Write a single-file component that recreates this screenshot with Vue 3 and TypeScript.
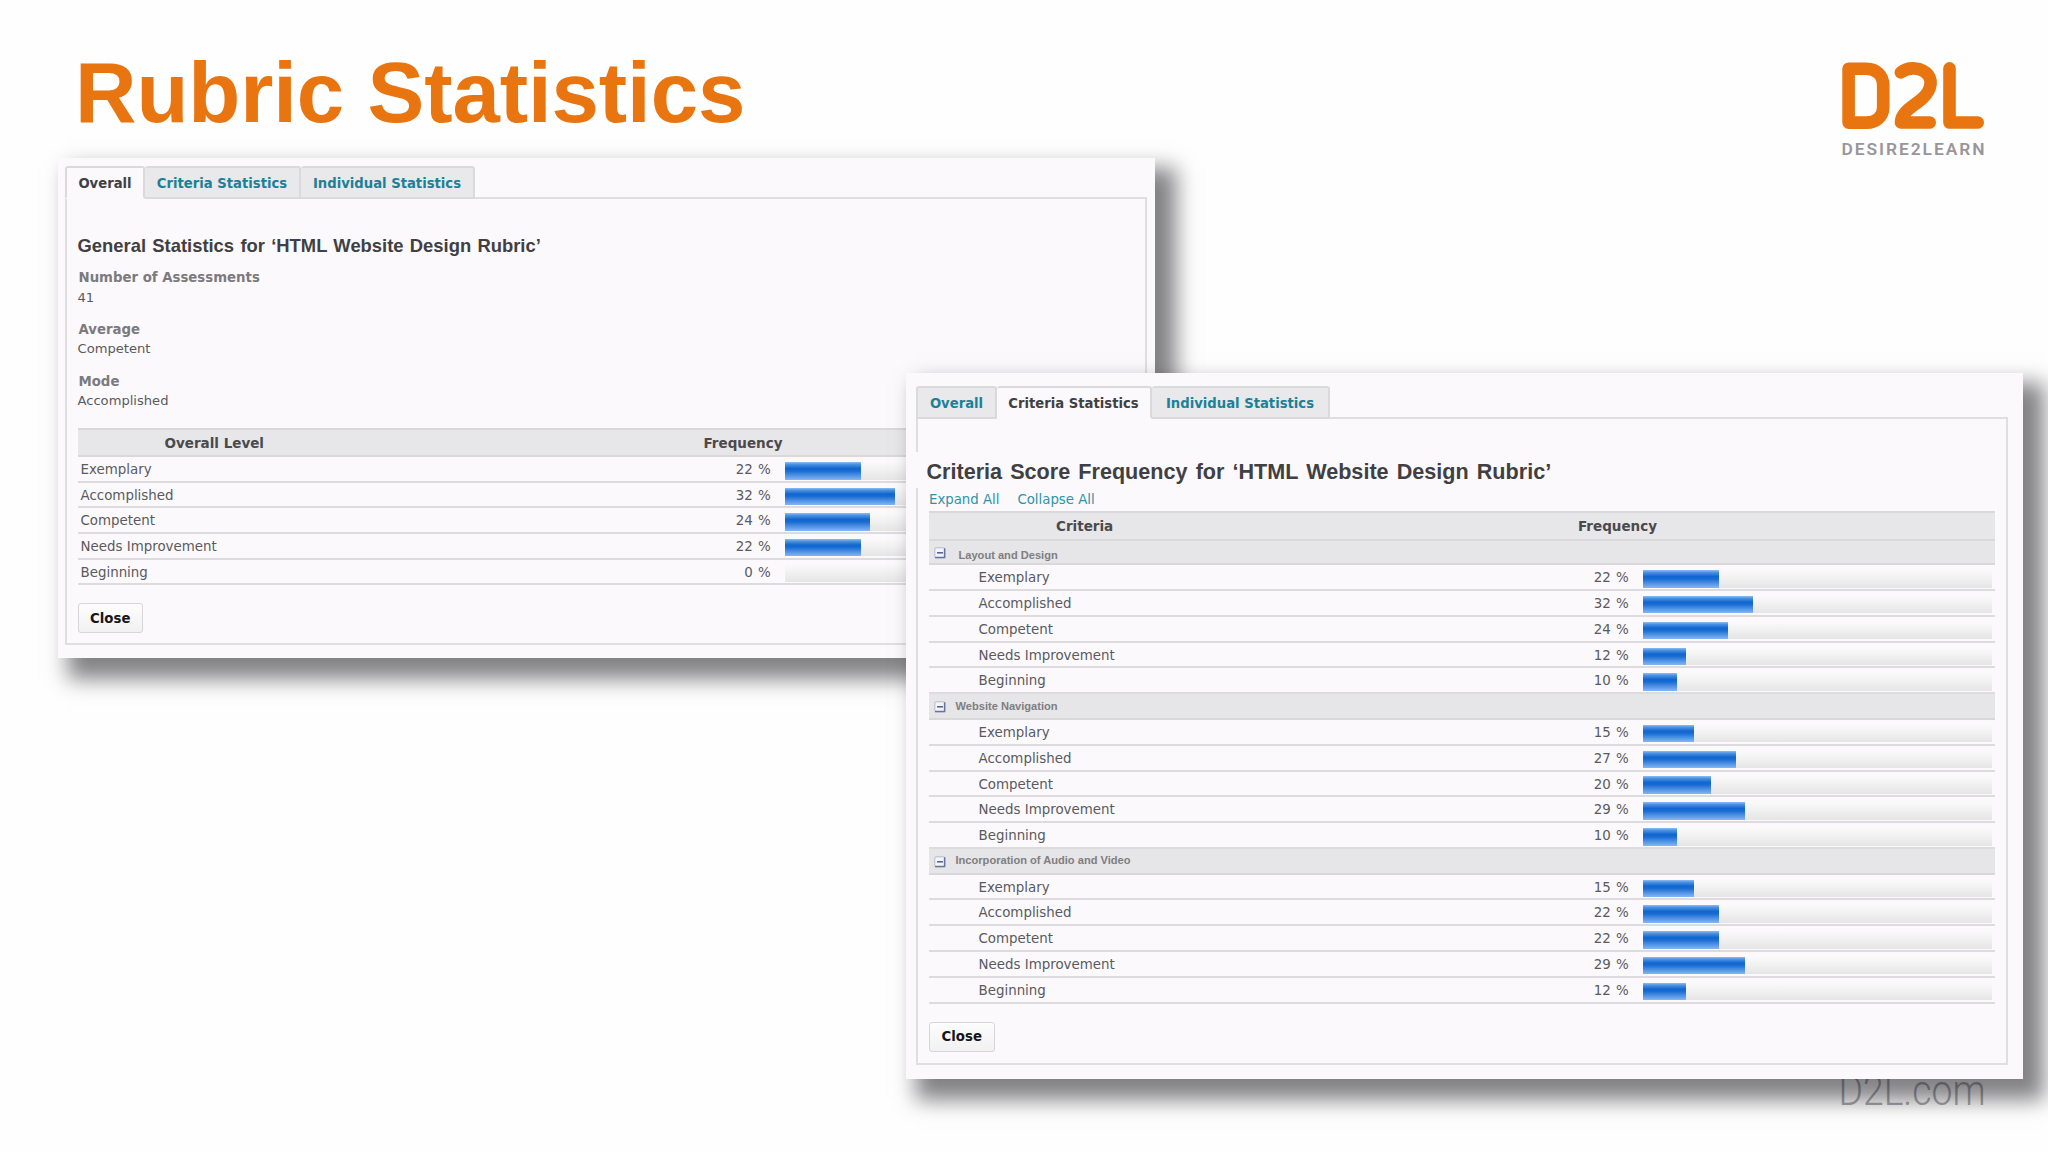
<script setup lang="ts">
interface Level {
  name: string
  percent: number
}
interface Group {
  title: string
  first: boolean
  levels: Level[]
}

const levelNames: string[] = ['Exemplary', 'Accomplished', 'Competent', 'Needs Improvement', 'Beginning']

const toLevels = (percents: number[]): Level[] =>
  percents.map((percent, i) => ({ name: levelNames[i], percent }))

const overall: Level[] = toLevels([22, 32, 24, 22, 0])

const facts = [
  { label: 'Number of Assessments', value: '41' },
  { label: 'Average', value: 'Competent' },
  { label: 'Mode', value: 'Accomplished' },
]

const groups: Group[] = [
  { title: 'Layout and Design', first: true, levels: toLevels([22, 32, 24, 12, 10]) },
  { title: 'Website Navigation', first: false, levels: toLevels([15, 27, 20, 29, 10]) },
  { title: 'Incorporation of Audio and Video', first: false, levels: toLevels([15, 22, 22, 29, 12]) },
]

/* Bars grow in whole steps: one step is 2.5 percent. */
const STEP = 8.49
const barWidth = (percent: number): string => `${(Math.round(percent * 0.4) * STEP).toFixed(1)}px`
</script>

<template>
  <main class="slide">
    <h1 class="title">Rubric Statistics</h1>

    <svg class="logo" width="160" height="110" viewBox="0 0 160 110">
      <g fill="none" stroke="#e8750f" stroke-width="12.6" stroke-linecap="round" stroke-linejoin="round">
        <path d="M18.6 18.8H36.5C46 18.8 53.2 25.4 53.2 35.4V57.500C53.200 66.500 46 72.600 36.500 72.600H18.600Z" />
        <path d="M70.800 22.500C78 16.400 92 16.900 98 24.900C104 33 99 43.500 90 50.500C80 58 70.800 63.500 71 72.500H99.700" />
        <path d="M119.500 18.400V72.500H147.700" />
      </g>
      <text x="11.500" y="104.500" textLength="143" lengthAdjust="spacing">DESIRE2LEARN</text>
    </svg>

    <svg class="site" width="160" height="60" viewBox="0 0 160 60">
      <text x="8.500" y="44.500" textLength="147" lengthAdjust="spacingAndGlyphs">D2L.com</text>
    </svg>

    <section class="window window-overall">
      <nav class="tabs">
        <a class="tab active w78">Overall</a>
        <a class="tab w156">Criteria Statistics</a>
        <a class="tab w174">Individual Statistics</a>
      </nav>
      <div class="panel">
        <h2>General Statistics for ‘HTML Website Design Rubric’</h2>
        <dl class="facts">
          <div v-for="f in facts" :key="f.label" class="fact">
            <dt>{{ f.label }}</dt>
            <dd>{{ f.value }}</dd>
          </div>
        </dl>
        <div class="table">
          <div class="head">
            <span class="head-name">Overall Level</span>
            <span>Frequency</span>
          </div>
          <div v-for="l in overall" :key="l.name" class="row">
            <span class="name">{{ l.name }}</span>
            <span class="pct">{{ l.percent }} %</span>
            <span class="track"><span class="bar" :style="{ width: barWidth(l.percent) }"></span></span>
          </div>
        </div>
        <button class="close" type="button">Close</button>
      </div>
    </section>

    <section class="window window-criteria">
      <nav class="tabs">
        <a class="tab w81">Overall</a>
        <a class="tab active w155">Criteria Statistics</a>
        <a class="tab w178">Individual Statistics</a>
      </nav>
      <div class="panel">
        <h2>Criteria Score Frequency for ‘HTML Website Design Rubric’</h2>
        <div class="links"><a>Expand All</a><a>Collapse All</a></div>
        <div class="table">
          <div class="head">
            <span class="head-name">Criteria</span>
            <span>Frequency</span>
          </div>
          <template v-for="g in groups" :key="g.title">
            <div class="group" :class="{ first: g.first }">
              <svg class="toggle" width="12" height="12" viewBox="0 0 12 12">
                <rect x="0.800" y="0.800" width="10" height="10" rx="1.200" fill="#f4f5f9" stroke="#b4b9ca" />
                <path d="M10.600 1.200V10.500H1" fill="none" stroke="#69769c" stroke-width="1.500" />
                <path d="M3 5.800H9" stroke="#4c5c90" stroke-width="1.500" />
              </svg>
              <span>{{ g.title }}</span>
            </div>
            <div v-for="l in g.levels" :key="l.name" class="row">
              <span class="name">{{ l.name }}</span>
              <span class="pct">{{ l.percent }} %</span>
              <span class="track"><span class="bar" :style="{ width: barWidth(l.percent) }"></span></span>
            </div>
          </template>
        </div>
        <button class="close" type="button">Close</button>
      </div>
    </section>
  </main>
</template>

<style>
body {
  margin: 0;
  background: #fefefe;
}
</style>

<style scoped>
.slide {
  position: relative;
  width: 2048px;
  height: 1152px;
  overflow: hidden;
  background: #fefefe;
  font-family: "DejaVu Sans", Verdana, sans-serif;
  font-size: 13.4px;
  color: #5a595c;
}
.slide * {
  box-sizing: border-box;
}
.title {
  margin: 0;
  padding: 43px 0 0 75px;
  font: bold 85.2px/100px "Liberation Sans", Arial, sans-serif;
  letter-spacing: -0.12px;
  color: #e8750f;
  white-space: nowrap;
}
.logo {
  position: absolute;
  left: 1830px;
  top: 50px;
}
.logo text {
  font: 600 17.4px Roboto, sans-serif;
  fill: #98969a;
}
.site {
  position: absolute;
  left: 1830px;
  top: 1060px;
}
.site text {
  font: 300 42px Roboto, sans-serif;
  fill: #a9a8ab;
}

.window {
  position: absolute;
  background: #fbf9fc;
  box-shadow: 15.5px 15.5px 20px 5.5px rgba(10, 8, 14, 0.5);
}
.window-overall {
  left: 58px;
  top: 158px;
  width: 1096.500px;
  height: 500px;
  padding: 8px 0 0 7px;
}
.window-criteria {
  left: 906px;
  top: 373px;
  width: 1117px;
  height: 705.500px;
  padding: 13px 0 0 10px;
}

.tabs {
  position: relative;
  z-index: 1;
  display: flex;
  height: 33px;
  margin-bottom: -2px;
}
.tab {
  display: flex;
  align-items: center;
  justify-content: center;
  padding-top: 2px;
  border: solid #dad9dc;
  border-width: 2px 2px 2px 0;
  border-radius: 3px 3px 0 0;
  background: #e9e8ea;
  color: #1b8198;
  font-weight: bold;
  font-size: 13.2px;
  white-space: nowrap;
}
.tab:first-child {
  border-left-width: 2px;
}
.tab.active {
  background: #fbf9fc;
  color: #403f42;
  border-bottom-color: #fbf9fc;
}
.w78 { width: 80px; }
.w156 { width: 156px; }
.w174 { width: 174px; }
.w81 { width: 81px; }
.w155 { width: 155px; }
.w178 { width: 178px; }

.panel {
  border: 2px solid #dfdee0;
}
.window-overall .panel {
  width: 1082px;
  height: 448px;
  padding: 35px 8px 0 10.500px;
}
.window-criteria .panel {
  width: 1092px;
  height: 648px;
  padding: 33px 11px 0 11px;
}
h2 {
  margin: 0;
  color: #403f42;
  white-space: nowrap;
  font-family: "Liberation Sans", Arial, sans-serif;
}
.window-overall h2 {
  position: relative;
  top: 1px;
  font-size: 18.4px;
  line-height: 22px;
  word-spacing: 1.2px;
}
.window-criteria h2 {
  position: relative;
  margin-left: -19px;
  padding: 3px 0 0 16.500px;
  height: 36px;
  background: #fbf9fc;
  font-size: 21.6px;
  line-height: 34px;
  word-spacing: 2.1px;
}
.facts {
  margin: 12.2px 0 17.300px;
  line-height: 19.500px;
}
.fact + .fact {
  margin-top: 12.7px;
}
dt {
  padding-left: 1px;
  font-weight: bold;
  font-size: 13.3px;
  color: #7b7a7d;
}
dd {
  margin: 0;
  font-size: 13.1px;
}
.links {
  display: flex;
  gap: 18px;
  height: 23px;
  line-height: 24.5px;
  font-size: 13.3px;
  color: #2f93a6;
}

.head {
  display: flex;
  align-items: center;
  padding-top: 1px;
  border: solid #d9d8da;
  border-width: 2px 0;
  background: #e7e6e8;
  color: #4a494c;
  font-weight: bold;
  font-size: 13.5px;
}
.window-overall .head {
  height: 29.3px;
}
.window-criteria .head {
  height: 30px;
  padding-top: 0;
}
.window-overall .head-name {
  width: 626px;
  padding-left: 87px;
}
.window-criteria .head-name {
  width: 649px;
  padding-left: 127px;
}
.row {
  display: flex;
  align-items: flex-start;
  height: 25.79px;
  padding-right: 3.5px;
  border-bottom: 2px solid #dcdbde;
  line-height: 26.400px;
}
.window-overall .row {
  height: 25.6px;
  line-height: 26px;
}
.name {
  flex: 1;
  padding-left: 3px;
}
.window-criteria .name {
  padding-left: 49.5px;
}
.pct {
  margin-right: 14.2px;
  word-spacing: 1px;
}
.track {
  width: 348.5px;
  height: 17.5px;
  margin-top: 4.9px;
  background: linear-gradient(#fafafb, #f1f1f2 45%, #e5e5e6);
}
.bar {
  display: block;
  height: 100%;
  background: linear-gradient(#8fbdf0 0, #4a90e2 14%, #0f66cf 36%, #1b6cd3 50%, #4a8ee2 72%, #86b6f4 100%);
}
.group {
  display: flex;
  align-items: flex-start;
  height: 25.79px;
  padding: 7.100px 0 0 5px;
  border-bottom: 2px solid #d8d7d9;
  background: #e6e5e7;
  font: bold 11.1px/16px "Liberation Sans", Arial, sans-serif;
  color: #7f7e81;
}
.group span {
  margin: -3.5px 0 0 9.5px;
}
.group.first {
  height: 24.3px;
  padding-top: 6px;
}
.group.first span {
  margin: 0 0 0 12.5px;
}
.close {
  display: block;
  width: 65.500px;
  height: 30px;
  margin-top: 18px;
  padding: 0;
  border: 1.5px solid #d6d5d8;
  border-radius: 3px;
  background: linear-gradient(#fdfdfe, #f1f1f2);
  color: #161518;
  font: bold 13.3px "DejaVu Sans", Verdana, sans-serif;
}
</style>
